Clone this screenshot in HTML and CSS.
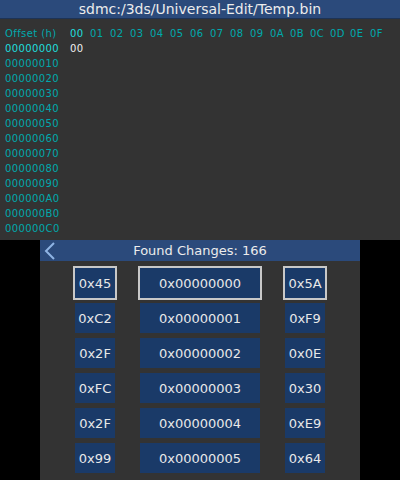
FILE: index.html
```html
<!DOCTYPE html>
<html>
<head>
<meta charset="utf-8">
<link rel="stylesheet" href="styles.css">
</head>
<body>
<div class="top">
  <div class="titlebar">sdmc:/3ds/Universal-Edit/Temp.bin</div>
  <div class="hex">
    <div class="head-row">
      <span class="off-label">Offset (h)</span>
      <span class="col cur">00</span><span class="col">01</span><span class="col">02</span><span class="col">03</span>
      <span class="col">04</span><span class="col">05</span><span class="col">06</span><span class="col">07</span>
      <span class="col">08</span><span class="col">09</span><span class="col">0A</span><span class="col">0B</span>
      <span class="col">0C</span><span class="col">0D</span><span class="col">0E</span><span class="col">0F</span>
    </div>
    <div class="row"><span class="off cur">00000000</span><span class="byte">00</span></div>
    <div class="row"><span class="off">00000010</span></div>
    <div class="row"><span class="off">00000020</span></div>
    <div class="row"><span class="off">00000030</span></div>
    <div class="row"><span class="off">00000040</span></div>
    <div class="row"><span class="off">00000050</span></div>
    <div class="row"><span class="off">00000060</span></div>
    <div class="row"><span class="off">00000070</span></div>
    <div class="row"><span class="off">00000080</span></div>
    <div class="row"><span class="off">00000090</span></div>
    <div class="row"><span class="off">000000A0</span></div>
    <div class="row"><span class="off">000000B0</span></div>
    <div class="row"><span class="off">000000C0</span></div>
  </div>
</div>
<div class="bottom-wrap">
  <div class="bottom">
    <div class="bar">
      <svg class="back" width="12" height="18" viewBox="0 0 12 18"><path d="M10 1 L2 9 L10 17" fill="none" stroke="#8fb4e4" stroke-width="2"/></svg>
      <span class="bar-title">Found Changes: 166</span>
    </div>
    <div class="grid">
      <div class="btn sel">0x45</div><div class="btn sel">0x00000000</div><div class="btn sel">0x5A</div>
      <div class="btn">0xC2</div><div class="btn">0x00000001</div><div class="btn">0xF9</div>
      <div class="btn">0x2F</div><div class="btn">0x00000002</div><div class="btn">0x0E</div>
      <div class="btn">0xFC</div><div class="btn">0x00000003</div><div class="btn">0x30</div>
      <div class="btn">0x2F</div><div class="btn">0x00000004</div><div class="btn">0xE9</div>
      <div class="btn">0x99</div><div class="btn">0x00000005</div><div class="btn">0x64</div>
    </div>
  </div>
</div>
</body>
</html>
```
FILE: styles.css
```css
html, body { margin: 0; padding: 0; background: #000; }
body { width: 400px; height: 480px; overflow: hidden; font-family: "DejaVu Sans", sans-serif; }

.top { width: 400px; height: 240px; background: #333333; display: flex; flex-direction: column; }
.titlebar {
  height: 18px; line-height: 18px; background: #2b4a7b; border-bottom: 1px solid #1d3356;
  color: #ececec; font-size: 14px; text-align: center;
}
.hex { padding: 7px 0 0 5px; font-size: 10px; letter-spacing: 0.4px; }
.head-row, .row { display: flex; height: 15px; line-height: 15px; }
.off-label, .off { width: 65px; color: #00a9ad; }
.col { width: 20px; color: #00a9ad; }
.col.cur, .off.cur { color: #1fdede; }
.byte { color: #f0f0f0; }

.bottom-wrap { display: flex; justify-content: center; height: 240px; background: #000; }
.bottom { width: 320px; height: 240px; background: #333333; }
.bar { position: relative; height: 21px; background: #2b4a7b; display: flex; align-items: center; justify-content: center; }
.back { position: absolute; left: 4px; top: 2px; }
.bar-title { color: #ececec; font-size: 13px; }

.grid {
  display: grid; grid-template-columns: 40px 120px 40px; column-gap: 25px; row-gap: 5px;
  justify-content: center; padding-top: 7px;
}
.btn {
  height: 30px; background: #1a3a68; color: #e8e8e8; font-size: 13px;
  display: flex; align-items: center; justify-content: center;
}
.btn.sel { outline: 2px solid #c8c8c8; }
```
